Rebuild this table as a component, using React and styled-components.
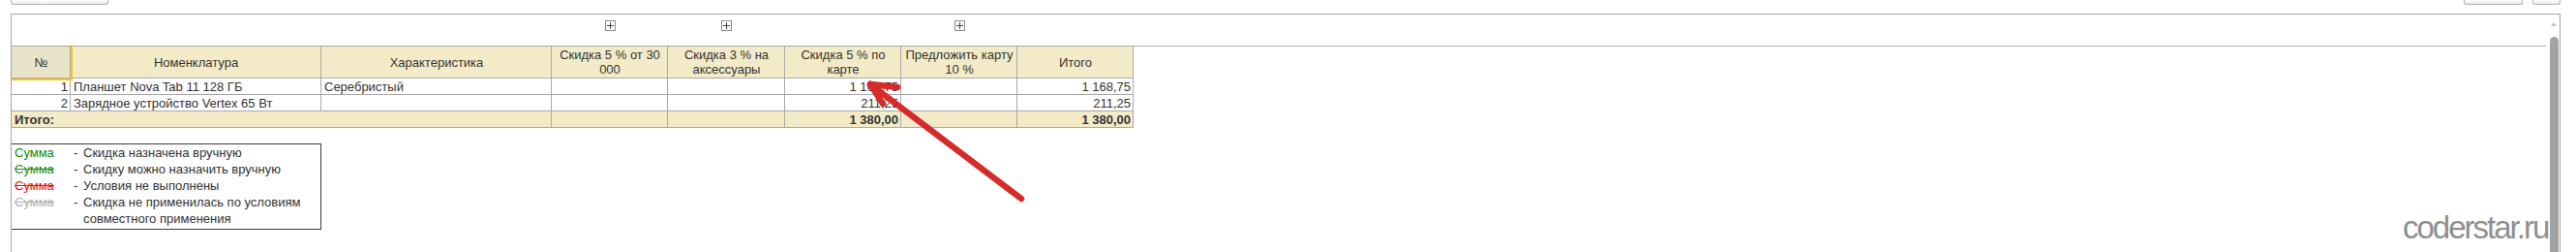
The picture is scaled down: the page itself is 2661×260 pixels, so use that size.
import React from "react";
import styled, { createGlobalStyle } from "styled-components";

const GlobalStyle = createGlobalStyle`
  html, body { margin: 0; padding: 0; background: #fff; }
  body { font-family: "Liberation Sans", Arial, sans-serif; color: #333; }
`;

const COLS = "61px 259px 238px 120px 121px 120px 120px 120px";
const LINE = "#a9a9a9";
const HEAD_BG = "#f3ebc7";

const Page = styled.div`
  position: relative;
  width: 2661px;
  height: 260px;
  overflow: hidden;
`;

const TopBar = styled.div`
  height: 14px;
  display: flex;
  justify-content: space-between;
  align-items: flex-start;
  padding: 0 16px 0 11px;
`;

const ButtonGroup = styled.div`
  display: flex;
  gap: 10px;
`;

const ToolButton = styled.div`
  box-sizing: border-box;
  width: ${(p) => p.$w}px;
  height: 5px;
  border: 1px solid #b4b4b4;
  border-top: none;
  border-radius: 0 0 3px 3px;
  background: linear-gradient(#ffffff, #ececec);
`;

const Frame = styled.div`
  box-sizing: border-box;
  margin-left: 11px;
  width: 2634px;
  height: 246px;
  border: 1px solid #a4a4a4;
  border-bottom: none;
  display: flex;
  overflow: hidden;
`;

const Content = styled.div`
  flex: 1;
  min-width: 0;
`;

const GroupRow = styled.div`
  display: grid;
  grid-template-columns: ${COLS} 1fr;
  height: 32px;
  border-bottom: 1px solid ${LINE};
`;

const PlusBox = styled.div`
  grid-column: ${(p) => p.$col};
  justify-self: center;
  margin-top: 6px;
  box-sizing: border-box;
  width: 11px;
  height: 11px;
  border: 1px solid #8c8c8c;
  background: #fff;
  position: relative;
  &::before {
    content: "";
    position: absolute;
    left: 1px;
    top: 4px;
    width: 7px;
    height: 1px;
    background: #444;
  }
  &::after {
    content: "";
    position: absolute;
    left: 4px;
    top: 1px;
    width: 1px;
    height: 7px;
    background: #444;
  }
`;

const Grid = styled.div`
  display: grid;
  grid-template-columns: ${COLS};
  width: 1159px;
`;

const Cell = styled.div`
  box-sizing: border-box;
  position: relative;
  grid-column: span ${(p) => p.$span || 1};
  height: ${(p) => (p.$head ? 33 : 17)}px;
  border-right: 1px solid ${LINE};
  border-bottom: 1px solid ${LINE};
  background: ${(p) => p.$bg || "#fff"};
  display: flex;
  align-items: center;
  justify-content: ${(p) =>
    p.$align === "right" ? "flex-end" : p.$align === "center" ? "center" : "flex-start"};
  text-align: ${(p) => p.$align || "left"};
  padding: 0 ${(p) => (p.$head ? 2 : 2)}px 0 3px;
  font-size: 13px;
  line-height: 15px;
  font-weight: ${(p) => (p.$bold ? 700 : 400)};
  color: #333;
  white-space: ${(p) => (p.$head ? "normal" : "nowrap")};
  overflow: visible;
`;

const SelectedHead = styled(Cell)`
  &::after {
    content: "";
    position: absolute;
    z-index: 2;
    left: -1px;
    top: -1px;
    width: 64px;
    height: 36px;
    box-sizing: border-box;
    border-right: 2px solid #f7c51f;
    border-bottom: 2px solid #f7c51f;
    pointer-events: none;
  }
`;

const Legend = styled.div`
  box-sizing: border-box;
  margin-top: 16px;
  margin-left: -1px;
  width: 321px;
  border: 1px solid #3a3a3a;
  padding: 0 0 2px 3px;
  display: grid;
  grid-template-columns: 61px 1fr;
  font-size: 13px;
  line-height: 17px;
`;

const Sample = styled.span`
  color: ${(p) => p.$color};
  text-decoration: ${(p) => (p.$strike ? "line-through" : "none")};
  text-decoration-color: ${(p) => p.$color};
`;

const Desc = styled.div`
  display: flex;
  color: #333;
  padding-right: 4px;
`;

const Dash = styled.span`
  flex: none;
  width: 10px;
`;

const ScrollTrack = styled.div`
  width: 14px;
  flex: none;
  display: flex;
  flex-direction: column;
  align-items: center;
  padding-top: 8px;
`;

const UpArrow = styled.div`
  width: 0;
  height: 0;
  margin-left: 2px;
  border-left: 3px solid transparent;
  border-right: 3px solid transparent;
  border-bottom: 4px solid #c4c4c4;
`;

const Thumb = styled.div`
  margin-top: 11px;
  margin-left: 2px;
  width: 9px;
  flex: 1;
  border-radius: 5px 5px 0 0;
  background: #a2a2a2;
`;

const Watermark = styled.div`
  position: absolute;
  left: 2482px;
  top: 218px;
  font-family: "Liberation Sans", Arial, sans-serif;
  font-size: 33px;
  line-height: 33px;
  letter-spacing: -2px;
  color: #8f8f8f;
  white-space: nowrap;
`;

const ArrowLayer = styled.svg`
  position: absolute;
  left: 0;
  top: 0;
  pointer-events: none;
`;

const headers = [
  "Номенклатура",
  "Характеристика",
  "Скидка 5 % от 30 000",
  "Скидка 3 % на аксессуары",
  "Скидка 5 % по карте",
  "Предложить карту 10 %",
  "Итого",
];

const rows = [
  { n: "1", name: "Планшет Nova Tab 11 128 ГБ", ch: "Серебристый", card: "1 168,75", total: "1 168,75" },
  { n: "2", name: "Зарядное устройство Vertex 65 Вт", ch: "", card: "211,25", total: "211,25" },
];

const legend = [
  { color: "#0b8a0b", strike: false, text: "Скидка назначена вручную" },
  { color: "#1f8f1f", strike: true, text: "Скидку можно назначить вручную" },
  { color: "#f01010", strike: true, text: "Условия не выполнены" },
  { color: "#b0b0b0", strike: true, text: "Скидка не применилась по условиям совместного применения" },
];

export default function App() {
  return (
    <Page>
      <GlobalStyle />
      <TopBar>
        <ToolButton $w={101} />
        <ButtonGroup>
          <ToolButton $w={61} />
          <ToolButton $w={29} />
        </ButtonGroup>
      </TopBar>
      <Frame>
        <Content>
          <GroupRow>
            <PlusBox $col={4} />
            <PlusBox $col={5} />
            <PlusBox $col={7} />
          </GroupRow>
          <Grid>
            <SelectedHead $head $align="center" $bg="#e9e3c9">№</SelectedHead>
            {headers.map((h) => (
              <Cell key={h} $head $align="center" $bg={HEAD_BG}>
                {h}
              </Cell>
            ))}
            {rows.map((r) => (
              <React.Fragment key={r.n}>
                <Cell $align="right">{r.n}</Cell>
                <Cell>{r.name}</Cell>
                <Cell>{r.ch}</Cell>
                <Cell />
                <Cell />
                <Cell $align="right">{r.card}</Cell>
                <Cell />
                <Cell $align="right">{r.total}</Cell>
              </React.Fragment>
            ))}
            <Cell $span={3} $bold $bg={HEAD_BG}>Итого:</Cell>
            <Cell $bg={HEAD_BG} />
            <Cell $bg={HEAD_BG} />
            <Cell $bg={HEAD_BG} $bold $align="right">1 380,00</Cell>
            <Cell $bg={HEAD_BG} />
            <Cell $bg={HEAD_BG} $bold $align="right">1 380,00</Cell>
          </Grid>
          <Legend>
            {legend.map((l) => (
              <React.Fragment key={l.text}>
                <div>
                  <Sample $color={l.color} $strike={l.strike}>Сумма</Sample>
                </div>
                <Desc>
                  <Dash>-</Dash>
                  <span>{l.text}</span>
                </Desc>
              </React.Fragment>
            ))}
          </Legend>
        </Content>
        <ScrollTrack>
          <UpArrow />
          <Thumb />
        </ScrollTrack>
      </Frame>
      <Watermark>coderstar.ru</Watermark>
      <ArrowLayer width="2661" height="260" viewBox="0 0 2661 260">
        <g stroke="#d62b2b" strokeWidth="6.5" strokeLinecap="round" strokeLinejoin="round" fill="none">
          <path d="M1055 205 L899 87" />
          <path d="M899 87 L927 90" />
          <path d="M899 87 L912 107" />
        </g>
      </ArrowLayer>
    </Page>
  );
}
